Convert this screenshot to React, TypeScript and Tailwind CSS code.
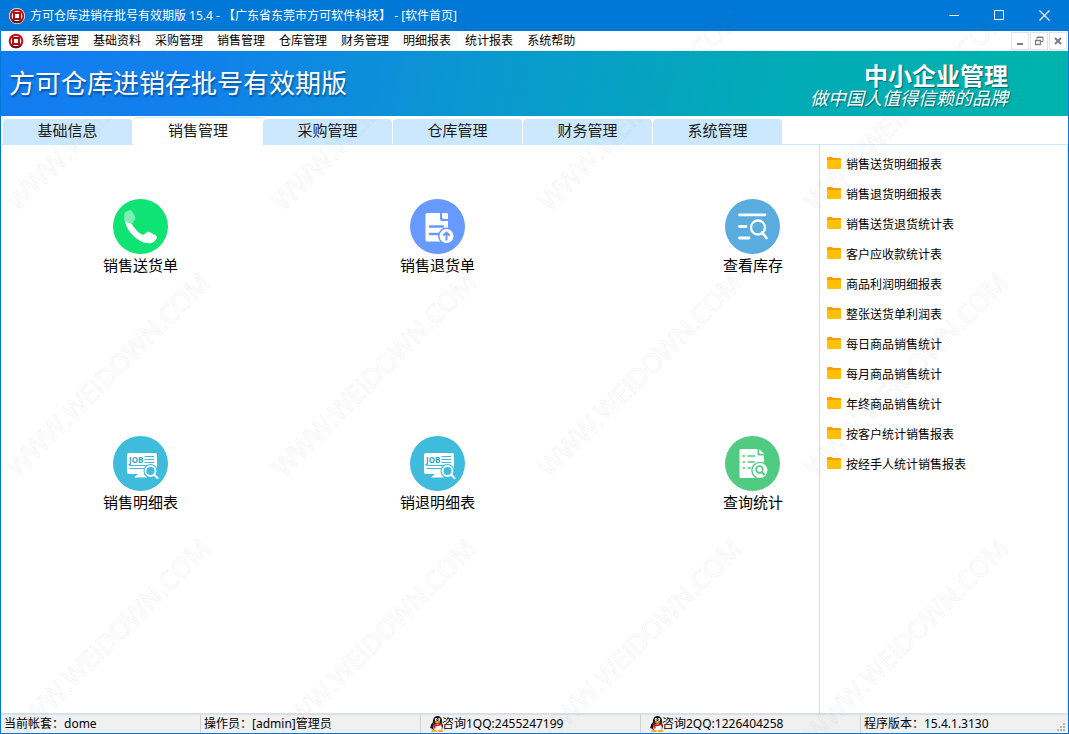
import type { ReactNode } from "react";

const menus = ["系统管理", "基础资料", "采购管理", "销售管理", "仓库管理", "财务管理", "明细报表", "统计报表", "系统帮助"];

const tabs = ["基础信息", "销售管理", "采购管理", "仓库管理", "财务管理", "系统管理"];
const activeTab = "销售管理";

const reports = [
  "销售送货明细报表",
  "销售退货明细报表",
  "销售送货退货统计表",
  "客户应收款统计表",
  "商品利润明细报表",
  "整张送货单利润表",
  "每日商品销售统计",
  "每月商品销售统计",
  "年终商品销售统计",
  "按客户统计销售报表",
  "按经手人统计销售报表",
];

function Logo() {
  return (
    <svg viewBox="0 0 16 16" className="size-4 shrink-0" aria-hidden="true">
      <circle cx="8" cy="8" r="8" fill="#fff" />
      <circle cx="8" cy="8" r="6.300" fill="none" stroke="#c01016" strokeWidth="2" />
      <path d="M3.200 12.100A6.300 6.300 0 0 0 12.800 12.100" fill="none" stroke="#6d0c10" strokeWidth="2" />
      <path d="M3.500 3.500L5.500 4.500M12.500 12.500L10.500 11.500" stroke="#c01016" strokeWidth="1.500" />
      <rect x="5" y="5" width="6" height="6" fill="#fff" stroke="#b00f14" strokeWidth="2" />
    </svg>
  );
}

function PhoneIcon() {
  return (
    <svg viewBox="0 0 55 55" className="size-[55px]" aria-hidden="true">
      <circle cx="27.5" cy="27.5" r="27.5" fill="#0fe374" />
      <path
        d="M11.500 19C12 28 18 36 25 40.500C31 44.500 37 45.500 41 43L44 39Q44.800 37.500 43 36.500L36.500 33Q35 32.300 33.500 33.500L31 35.500Q29.500 36 28 35C24.500 33 21.500 29 18.500 24.500Z"
        fill="#fff"
      />
      <path d="M14.500 12L17 11Q18.300 11 19 12.200L22.300 18Q22.800 19.300 22 20.300L19 24.500Q14.500 25 11.500 20Q10.500 15.500 12 13.300Z" fill="#7cf0b3" />
    </svg>
  );
}

function ReturnIcon() {
  return (
    <svg viewBox="0 0 55 55" className="size-[55px]" aria-hidden="true">
      <circle cx="27.5" cy="27.5" r="27.5" fill="#669aff" />
      <path d="M17 14H30V20Q30 22 32 22H38V40Q38 42.500 35.500 42.500H17Q15.500 42.500 15.500 41V15.500Q15.500 14 17 14Z" fill="#fff" />
      <path d="M32 14H36.500Q38 14 38 15.500V20H34Q32 20 32 18Z" fill="#fff" />
      <path d="M20 27.500H33M20 35H28" stroke="#669aff" strokeWidth="2.6" strokeLinecap="round" />
      <circle cx="36.500" cy="37" r="8.500" fill="#669aff" />
      <circle cx="36.500" cy="37" r="7" fill="#fff" />
      <path d="M36.500 41.500V34M33.300 36.500L36.500 33.500L39.700 36.500" stroke="#669aff" strokeWidth="2" fill="none" />
    </svg>
  );
}

function StockIcon() {
  return (
    <svg viewBox="0 0 55 55" className="size-[55px]" aria-hidden="true">
      <circle cx="27.5" cy="27.5" r="27.5" fill="#5aabde" />
      <g fill="none" stroke="#fff" strokeLinecap="round">
        <path d="M14.500 15.800H40M14.500 27.500H21M14.500 39H24" strokeWidth="2.8" />
        <circle cx="33" cy="28.500" r="7" strokeWidth="2.3" />
        <path d="M37 33.500L41.500 39" strokeWidth="2.6" />
      </g>
    </svg>
  );
}

function JobIcon() {
  return (
    <svg viewBox="0 0 55 55" className="size-[55px]" aria-hidden="true">
      <circle cx="27.5" cy="27.5" r="27.5" fill="#3fbbdc" />
      <rect x="14" y="17" width="30" height="21" rx="2" fill="#fff" />
      <path d="M25 38H32L34 41.500H21Z" fill="#fff" />
      <text x="16" y="27.200" fontSize="8" fontWeight="700" fontFamily="Open Sans, sans-serif" fill="#2ba6c8">
        JOB
      </text>
      <path d="M31.500 20.500H41M31.500 23.500H41M31.500 26.500H41M16.500 29.500H41M16.500 32.500H31" stroke="#3fbbdc" strokeWidth="1" />
      <circle cx="37.500" cy="35" r="7" fill="#3fbbdc" />
      <circle cx="37.500" cy="35" r="5" fill="#3fbbdc" stroke="#fff" strokeWidth="1.800" />
      <path d="M41 38.500L44.500 42" stroke="#fff" strokeWidth="2.200" strokeLinecap="round" />
    </svg>
  );
}

function QueryIcon() {
  return (
    <svg viewBox="0 0 55 55" className="size-[55px]" aria-hidden="true">
      <circle cx="27.5" cy="27.5" r="27.5" fill="#52cb82" />
      <path d="M16 13H32.500V18Q32.500 19.500 34 19.500H39V42H16Q14.500 42 14.500 40.500V14.500Q14.500 13 16 13Z" fill="#fff" />
      <path d="M34.200 13L39 18H35.500Q34.200 18 34.200 16.500Z" fill="#fff" />
      <g stroke="#52cb82" strokeWidth="1.700">
        <path d="M17.500 20H20M22.500 20H30M17.500 26H20M22.500 26H30M17.500 32H20M22.500 32H26" />
      </g>
      <circle cx="35" cy="34.500" r="8.800" fill="#52cb82" />
      <circle cx="35" cy="34.500" r="7.400" fill="#fff" />
      <circle cx="34.500" cy="33.500" r="3.300" fill="none" stroke="#52cb82" strokeWidth="1.700" />
      <path d="M37 36.200L39.500 39" stroke="#52cb82" strokeWidth="2.200" />
    </svg>
  );
}

function FolderIcon() {
  return (
    <svg viewBox="0 0 14 12" className="h-3 w-3.5 shrink-0" aria-hidden="true">
      <path d="M0 1Q0 0 1 0H5L6 1H13Q14 1 14 2V6H0Z" fill="#ff9c00" />
      <path d="M0 3H14V11Q14 12 13 12H1Q0 12 0 11Z" fill="#ffc107" />
    </svg>
  );
}

function PenguinIcon() {
  return (
    <svg viewBox="0 0 14 16" className="-mr-0.5 h-4 w-3.5 shrink-0" aria-hidden="true">
      <ellipse cx="7" cy="10" rx="6" ry="5" fill="#151515" />
      <ellipse cx="7.500" cy="5" rx="4.600" ry="5" fill="#151515" />
      <path d="M1.500 8L0 12L1.500 12.500L3 9Z" fill="#151515" />
      <ellipse cx="7.500" cy="11.300" rx="4.300" ry="3.900" fill="#fff" />
      <ellipse cx="6" cy="3.500" rx="1.200" ry="1.600" fill="#fff" />
      <ellipse cx="9" cy="3.500" rx="1.200" ry="1.600" fill="#fff" />
      <circle cx="6.300" cy="3.800" r="0.600" fill="#111" />
      <circle cx="8.700" cy="3.800" r="0.600" fill="#111" />
      <ellipse cx="7.500" cy="6" rx="2.900" ry="0.900" fill="#f7a400" />
      <path d="M3 7Q7.500 9.800 12 7L12 8.800Q7.500 10.800 5.500 10V12.500H3.500V9Z" fill="#e5161d" />
      <ellipse cx="4" cy="15" rx="3" ry="1" fill="#f7a400" />
      <ellipse cx="10.500" cy="15" rx="3" ry="1" fill="#f7a400" />
    </svg>
  );
}

function Shortcut({ label, icon }: { label: string; icon: ReactNode }) {
  return (
    <button type="button" className="flex flex-col items-center text-[15px] leading-[22px] text-black">
      {icon}
      {label}
    </button>
  );
}

function TitleBar() {
  return (
    <header className="flex h-[31px] items-center bg-[#0078d7] pr-0.5 pl-[9px] text-xs text-white">
      <Logo />
      <h1 className="ml-[5px] flex-1 whitespace-pre">方可仓库进销存批号有效期版 15.4 - 【广东省东莞市方可软件科技】 - [软件首页]</h1>
      <div className="flex h-full">
        <button type="button" aria-label="最小化" className="flex w-[45px] items-center justify-center">
          <svg viewBox="0 0 11 11" className="size-[11px]" stroke="#fff"><path d="M0 5.500H10" /></svg>
        </button>
        <button type="button" aria-label="最大化" className="flex w-[45px] items-center justify-center">
          <svg viewBox="0 0 11 11" className="size-[11px]" stroke="#fff" fill="none"><path d="M.5.5H9.500V9.500H.5Z" /></svg>
        </button>
        <button type="button" aria-label="关闭" className="flex w-[45px] items-center justify-center">
          <svg viewBox="0 0 11 11" className="size-[11px]" stroke="#fff" strokeWidth="1.100"><path d="M.5.5L10.500 10.500M10.500.5L.5 10.500" /></svg>
        </button>
      </div>
    </header>
  );
}

function MenuBar() {
  const box = "flex size-[18px] items-center justify-center border border-[#e3e3e3] bg-white";
  return (
    <nav className="flex h-5 items-center border-b border-[#f0f0f0] bg-white pl-[7px] text-xs text-black">
      <Logo />
      <ul className="ml-[7px] flex flex-1 gap-3.5 pt-px">
        {menus.map((m) => (
          <li key={m} className="flex">
            <button type="button">{m}</button>
          </li>
        ))}
      </ul>
      <div className="flex gap-px pr-px">
        <button type="button" aria-label="最小化子窗口" className={box}>
          <svg viewBox="0 0 10 10" className="size-2.5"><path d="M2 7H8V9H2Z" fill="#75818e" /></svg>
        </button>
        <button type="button" aria-label="还原子窗口" className={box}>
          <svg viewBox="0 0 10 10" className="size-2.5" fill="none" stroke="#75818e">
            <path d="M3 3.500V1H9V5.500H7M3 1.500H9" />
            <path d="M1.500 4V8.500H6.500V4M1 4.500H7" strokeWidth="1.300" />
          </svg>
        </button>
        <button type="button" aria-label="关闭子窗口" className={box}>
          <svg viewBox="0 0 10 10" className="size-2.5" stroke="#75818e" strokeWidth="2"><path d="M2 2L8 8M8 2L2 8" /></svg>
        </button>
      </div>
    </nav>
  );
}

function Banner() {
  return (
    <section className="flex h-[65px] items-center justify-between bg-[linear-gradient(100deg,#137df2_0%,#1080ec_18%,#0a98d0_45%,#02aab8_70%,#00b4ac_100%)] pr-[60px] pl-2 text-white">
      <h2 className="pb-0.5 text-[26px] leading-8 [text-shadow:1px_2px_2px_rgba(0,40,90,0.55)]">方可仓库进销存批号有效期版</h2>
      <div className="flex flex-col items-end pt-1 [text-shadow:1px_1px_1px_rgba(0,50,60,0.6)]">
        <p className="text-2xl leading-6 font-bold">中小企业管理</p>
        <p className="text-lg leading-5 italic">做中国人值得信赖的品牌</p>
      </div>
    </section>
  );
}

function TabBar() {
  return (
    <div role="tablist" className="flex h-[29px] items-end border-b border-[#cce8ff] bg-white pl-0.5">
      {tabs.map((t) =>
        t === activeTab ? (
          <button
            key={t}
            type="button"
            role="tab"
            aria-selected="true"
            className="-mb-px h-7 w-[130px] rounded-t border-t border-[#cce8ff] bg-white pb-1 text-[15px] leading-5 text-[#1a1a1a]"
          >
            {t}
          </button>
        ) : (
          <button
            key={t}
            type="button"
            role="tab"
            aria-selected="false"
            className="h-[25px] w-[130px] rounded-t border-r border-white bg-[#cce8ff] pb-1 text-[15px] leading-5 text-[#1a1a1a]"
          >
            {t}
          </button>
        )
      )}
    </div>
  );
}

function StatusBar() {
  const cell = "flex h-full items-center border-r border-[#d0d0d0] pl-[3px]";
  return (
    <footer className="flex h-5 items-center border-t-2 border-[#d5e0e8] bg-[#f0f0f0] text-xs text-black">
      <div className={cell + " w-[200px]"}>当前帐套：dome</div>
      <div className={cell + " w-[220px]"}>操作员：[admin]管理员</div>
      <div className={cell + " w-[220px]"}>
        <span className="flex items-center pl-1.5"><PenguinIcon />咨询1QQ:2455247199</span>
      </div>
      <div className={cell + " w-[220px]"}>
        <span className="flex items-center pl-1.5"><PenguinIcon />咨询2QQ:1226404258</span>
      </div>
      <div className="flex h-full flex-1 items-center pl-[3px]">程序版本：15.4.1.3130</div>
      <svg viewBox="0 0 10 10" className="mr-px size-2.5 self-end" fill="#b5b5b5" aria-hidden="true">
        <path d="M6 0H8V2H6ZM3 3H5V5H3ZM6 3H8V5H6ZM0 6H2V8H0ZM3 6H5V8H3ZM6 6H8V8H6Z" />
      </svg>
    </footer>
  );
}

function Watermarks() {
  return (
    <div
      aria-hidden="true"
      className="pointer-events-none absolute inset-0 grid auto-rows-[266px] grid-cols-[repeat(5,266px)] overflow-hidden pt-2 select-none"
    >
      {Array.from({ length: 15 }, (_, i) => (
        <span key={i} className="flex h-[200px] w-[216px] items-center justify-center">
          <span className="-rotate-45 font-[Open_Sans] text-[26px] whitespace-nowrap text-transparent [-webkit-text-stroke:1px_rgba(120,120,120,0.09)]">
            WWW.WEIDOWN.COM
          </span>
        </span>
      ))}
    </div>
  );
}

export default function App() {
  return (
    <div className="relative flex min-h-screen flex-col overflow-hidden bg-white font-['Noto_Sans','Noto_Sans_CJK_SC',sans-serif]">
      <TitleBar />
      <div className="flex flex-1 flex-col border-x border-b border-[#0078d7]">
        <MenuBar />
        <Banner />
        <TabBar />
        <main className="flex flex-1">
          <div className="grid flex-1 auto-rows-[237px] grid-cols-[279fr_315fr_224fr] items-start pt-[54px]">
            <div className="flex justify-center"><Shortcut label="销售送货单" icon={<PhoneIcon />} /></div>
            <div className="flex justify-center"><Shortcut label="销售退货单" icon={<ReturnIcon />} /></div>
            <div className="flex justify-end pr-9"><Shortcut label="查看库存" icon={<StockIcon />} /></div>
            <div className="flex justify-center"><Shortcut label="销售明细表" icon={<JobIcon />} /></div>
            <div className="flex justify-center"><Shortcut label="销退明细表" icon={<JobIcon />} /></div>
            <div className="flex justify-end pr-9"><Shortcut label="查询统计" icon={<QueryIcon />} /></div>
          </div>
          <aside className="w-[249px] border-x border-r-[#cce8ff] border-l-[#dcdcdc] pt-[5px] pl-[7px]">
            <ul>
              {reports.map((r) => (
                <li key={r} className="flex h-[30px] items-center">
                  <a href="#" className="flex items-start gap-[5px] text-xs leading-4 text-black">
                    <FolderIcon />
                    {r}
                  </a>
                </li>
              ))}
            </ul>
          </aside>
        </main>
        <StatusBar />
      </div>
      <Watermarks />
    </div>
  );
}
